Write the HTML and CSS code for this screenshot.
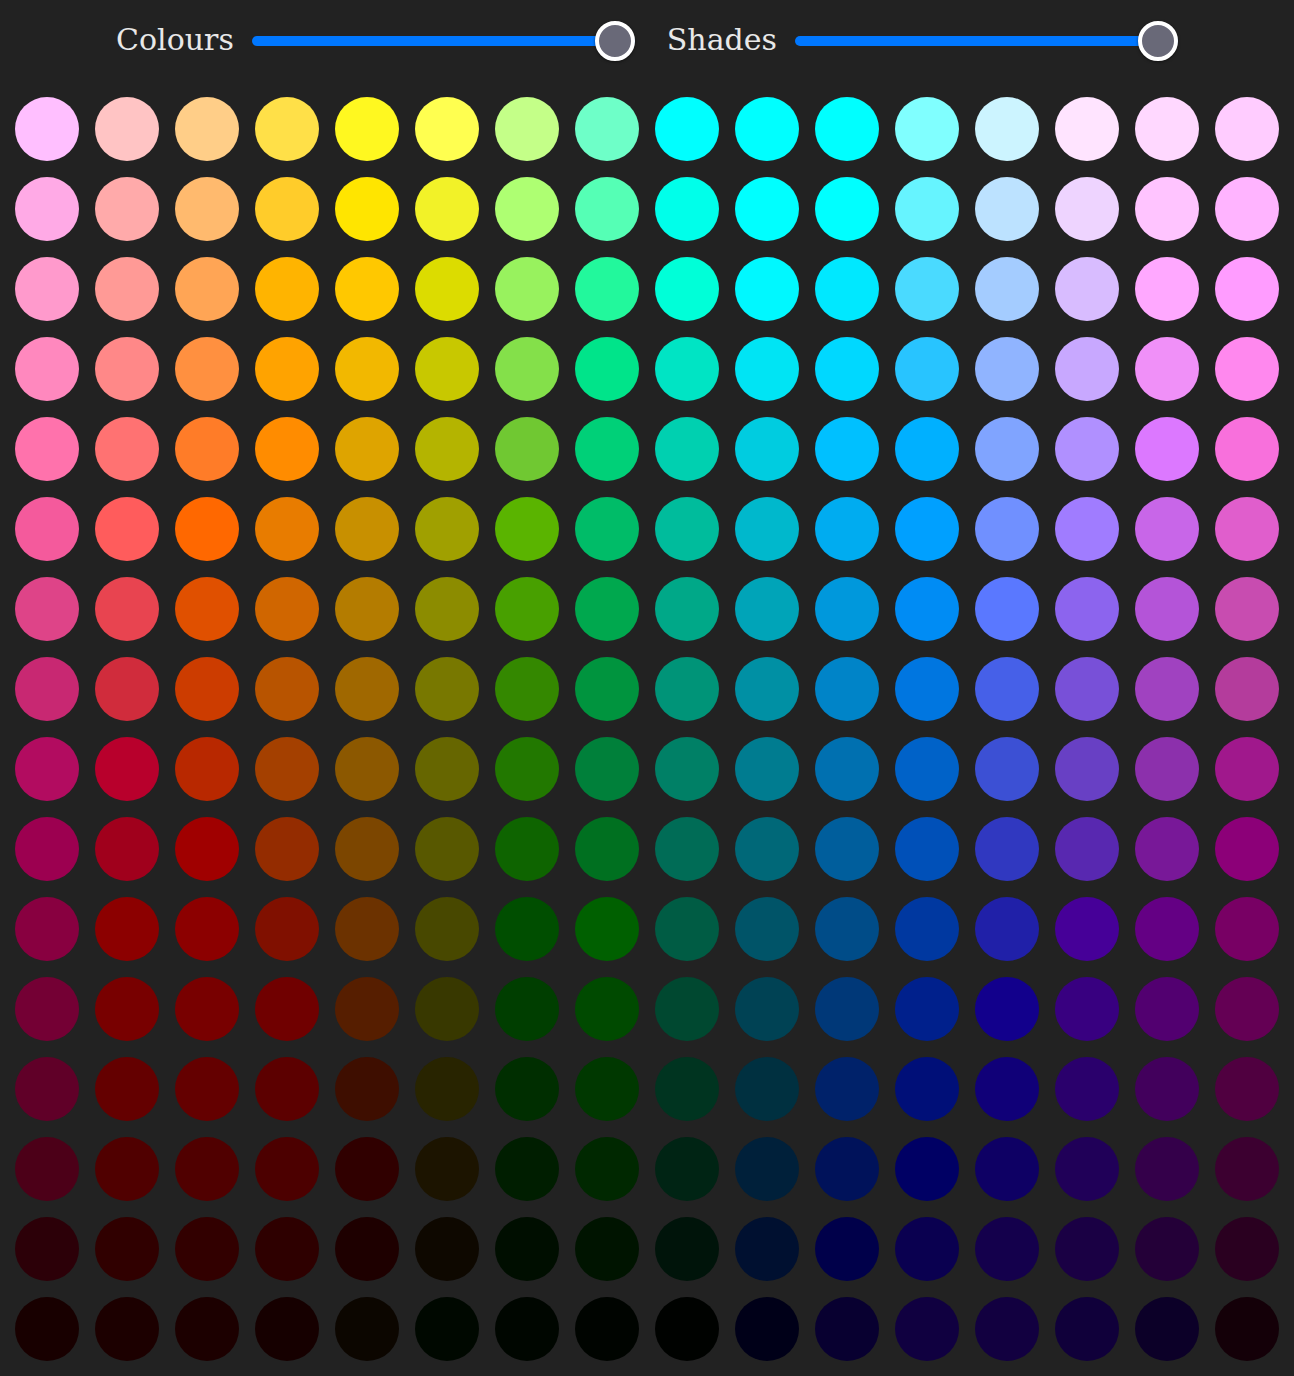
FILE: index.html
```html
<!DOCTYPE html>
<html lang="en">
<head>
    <meta charset="UTF-8">
    <meta name="viewport" content="width=device-width, initial-scale=1.0">
    <title>Palette</title>
    <link rel="stylesheet" href="styles.css">
</head>
<body>
    <div class="controls">
        <label class="control">
            <span class="control-label">Colours</span>
            <input type="range" class="slider" id="colours" min="1" max="16" value="16">
        </label>
        <label class="control">
            <span class="control-label">Shades</span>
            <input type="range" class="slider" id="shades" min="1" max="16" value="16">
        </label>
    </div>

    <div class="grid" id="grid"></div>

    <script>
        // One row per shade, one column per colour
        const palette = [
            ['#FFBFFF','#FFC4C4','#FFCE88','#FFE048','#FFF820','#FFFF50','#C4FF88','#6EFFC8','#00FFFF','#00FFFF','#00FFFF','#80FFFF','#CCF4FF','#FFE4FF','#FFD8FF','#FFCCFF'],
            ['#FFAAE6','#FFAAAA','#FFBA6E','#FFCC2A','#FFE500','#F2F228','#AEFF72','#55FFB5','#00FFEA','#00FFFF','#00FFFF','#66F4FF','#BCE2FF','#EED4FF','#FFC4FF','#FFB4FF'],
            ['#FF9ACC','#FF9A96','#FFA555','#FFB400','#FFC800','#DCDC00','#98F25E','#22F89C','#00FFD8','#00F8FF','#00E8FF','#4ADAFF','#A4CCFF','#D8BCFF','#FFA8FF','#FF9CFF'],
            ['#FF88BE','#FF8888','#FF9040','#FFA300','#F2B800','#C8C800','#84E04A','#00E48A','#00E4C4','#00E4F4','#00D8FF','#28C4FF','#90B4FF','#C8A8FF','#F090F8','#FF88EE'],
            ['#FF72AC','#FF7272','#FF7C28','#FF8C00','#DEA400','#B4B400','#70C832','#00D078','#00D0B0','#00CCE0','#00C0FF','#00B0FF','#80A4FF','#B090FF','#DC78FF','#F870DC'],
            ['#F45A9C','#FF5C5C','#FF6800','#E87C00','#C89000','#A0A000','#5AB400','#00BC68','#00BC9C','#00B8CC','#00ACF0','#00A0FF','#7090FF','#A07CFF','#C866E8','#E05ECC'],
            ['#DE4488','#E84450','#E05000','#D06600','#B47C00','#8C8C00','#48A000','#00A84E','#00A888','#00A4B8','#0098DC','#008CF4','#5A78FF','#8C64EE','#B454D8','#C84CB0'],
            ['#C82872','#D02C3C','#CC3C00','#B85400','#A06800','#787800','#348800','#00943E','#009478','#0090A4','#0084C8','#0076E0','#4660E8','#7850D8','#A042C0','#B43C9C'],
            ['#B20C60','#B8002C','#B82800','#A44000','#8C5800','#666600','#227800','#00803A','#008066','#007C90','#0070B0','#0062C8','#3C50D4','#6840C4','#8C30AC','#A0188C'],
            ['#9C0050','#A0001C','#A00000','#942C00','#7C4600','#585800','#0E6400','#007020','#006C56','#006878','#005E9C','#0050B8','#3038C0','#5828B0','#781898','#8C0078'],
            ['#880040','#8C0000','#8C0000','#801000','#6C3200','#484800','#004E00','#006000','#005C44','#005468','#004C88','#0038A0','#2020A8','#460098','#640084','#780064'],
            ['#740034','#780000','#780000','#700000','#561E00','#383800','#003E00','#004A00','#004830','#004254','#003878','#00208C','#12008C','#380080','#520070','#640054'],
            ['#600028','#640000','#640000','#5C0000','#3E0E00','#282400','#002E00','#003800','#003420','#003040','#00226A','#000F78','#100078','#2A006C','#42005C','#500040'],
            ['#4C0018','#500000','#500000','#4C0000','#300000','#1C1400','#001E00','#002800','#002414','#00203A','#00125A','#000064','#0E0064','#200058','#34004A','#3C0030'],
            ['#2C0008','#300000','#320000','#2E0000','#1E0000','#0E0800','#000E00','#001400','#00140A','#001030','#00004A','#0A0050','#14004C','#1A0044','#240038','#2A0020'],
            ['#180000','#1C0000','#1C0000','#160000','#0C0600','#000800','#000600','#000400','#000200','#000018','#080030','#100040','#120040','#10003A','#0C0028','#140008']
        ];

        function drawGrid() {
            const colours = +document.getElementById('colours').value;
            const shades = +document.getElementById('shades').value;
            const grid = document.getElementById('grid');
            grid.innerHTML = '';
            grid.style.gridTemplateColumns = `repeat(${colours}, 64px)`;
            palette.slice(0, shades).forEach(row => {
                row.slice(0, colours).forEach(colour => {
                    const dot = document.createElement('div');
                    dot.className = 'swatch';
                    dot.title = colour;
                    dot.style.background = colour;
                    grid.appendChild(dot);
                });
            });
        }

        document.querySelectorAll('.slider').forEach(s => s.addEventListener('input', drawGrid));
        drawGrid();
    </script>
</body>
</html>
```

FILE: styles.css
```css
body { margin: 0; background: #222222; font-family: "DejaVu Serif", serif; }

.controls { height: 82px; display: flex; align-items: center; justify-content: center; gap: 32px; }
.control { display: flex; align-items: center; gap: 18px; }
.control-label { color: #e8e8e8; font-size: 30px; line-height: 1; margin-top: -2px; }

.slider { -webkit-appearance: none; appearance: none; width: 383px; height: 40px; margin: 0; background: transparent; }
.slider::-webkit-slider-runnable-track { height: 10px; background: #0077ff; border-radius: 5px; }
.slider::-webkit-slider-thumb {
    -webkit-appearance: none;
    width: 40px; height: 40px; margin-top: -15px;
    box-sizing: border-box;
    border-radius: 50%; border: 4px solid #ffffff;
    background: #696978;
    box-shadow: 0 1px 3px rgba(0, 0, 0, 0.5);
}

.grid { display: grid; grid-template-columns: repeat(16, 64px); gap: 16px; justify-content: center; padding: 15px; }
.swatch { width: 64px; height: 64px; border-radius: 50%; }
```
